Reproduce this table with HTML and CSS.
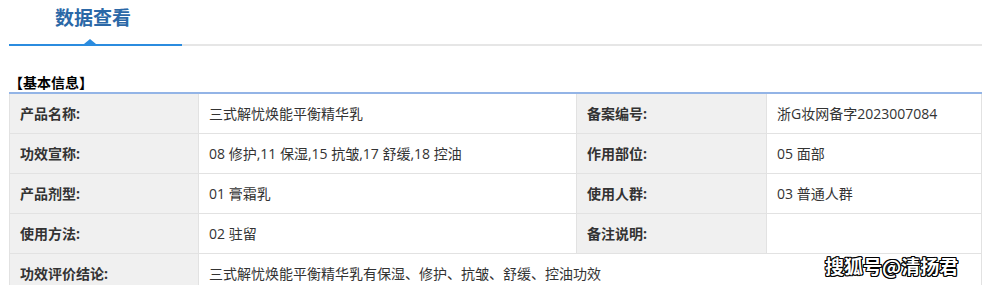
FILE: index.html
```html
<!DOCTYPE html>
<html lang="zh-CN">
<head>
    <meta charset="UTF-8">
    <title>数据查看</title>
    <link rel="stylesheet" href="styles.css">
</head>
<body>
    <div class="page">
        <div class="tabs">
            <div class="tab active">数据查看</div>
        </div>

        <div class="section-title">【基本信息】</div>

        <div class="info-table">
            <div class="cell label">产品名称:</div>
            <div class="cell value">三式解忧焕能平衡精华乳</div>
            <div class="cell label">备案编号:</div>
            <div class="cell value">浙G妆网备字2023007084</div>

            <div class="cell label">功效宣称:</div>
            <div class="cell value">08 修护,11 保湿,15 抗皱,17 舒缓,18 控油</div>
            <div class="cell label">作用部位:</div>
            <div class="cell value">05 面部</div>

            <div class="cell label">产品剂型:</div>
            <div class="cell value">01 膏霜乳</div>
            <div class="cell label">使用人群:</div>
            <div class="cell value">03 普通人群</div>

            <div class="cell label">使用方法:</div>
            <div class="cell value">02 驻留</div>
            <div class="cell label">备注说明:</div>
            <div class="cell value"></div>

            <div class="cell label">功效评价结论:</div>
            <div class="cell value wide">三式解忧焕能平衡精华乳有保湿、修护、抗皱、舒缓、控油功效</div>
        </div>
    </div>

    <div class="watermark">搜狐号@清扬君</div>
</body>
</html>
```

FILE: styles.css
```css
body {
    margin: 0;
    background-color: #fff;
    font-family: "Open Sans", "Noto Sans CJK SC", sans-serif;
    color: #333;
    overflow: hidden;
}
.page {
    padding-left: 9px;
}

/* tab bar */
.tabs {
    height: 44px;
    border-bottom: 2px solid #e6e6e6;
    display: flex;
}
.tab {
    width: 173px;
    box-sizing: border-box;
    padding-left: 46px;
    font-family: "Noto Sans CJK SC", sans-serif;
    font-size: 19px;
    font-weight: bold;
    line-height: 34px;
    color: #2b68a7;
    position: relative;
}
.tab.active {
    border-bottom: 2px solid #2b8cdf;
    height: 46px;
    box-sizing: border-box;
}
.tab.active::after {
    content: "";
    position: absolute;
    left: 75px;
    bottom: 0;
    border-left: 6px solid transparent;
    border-right: 6px solid transparent;
    border-bottom: 5px solid #2b8cdf;
}

.section-title {
    margin-top: 27px;
    font-family: "Noto Sans CJK SC", sans-serif;
    font-size: 14px;
    font-weight: bold;
    color: #000;
    line-height: 18px;
    padding-bottom: 1px;
    border-bottom: 2px solid #93b4e6;
}

/* info grid */
.info-table {
    display: grid;
    grid-template-columns: 189px 378px 190px 1fr;
    border-left: 1px solid #e2e2e2;
}
.cell {
    height: 39px;
    line-height: 39px;
    border-bottom: 1px solid #e2e2e2;
    border-right: 1px solid #e2e2e2;
    font-size: 14px;
    white-space: nowrap;
}
.label {
    background-color: #f0f0f0;
    font-weight: bold;
    padding-left: 10px;
    color: #333;
}
.value {
    padding-left: 10px;
    color: #333;
}
.wide {
    grid-column: 2 / 5;
}

.watermark {
    position: absolute;
    left: 825px;
    top: 252px;
    font-family: "Noto Sans CJK SC", sans-serif;
    font-size: 19px;
    font-weight: bold;
    color: #fff;
    text-shadow: -1px 0 #000, 1px 0 #000, 0 -1px #000, 0 1px #000, 1px 1px #000, -1px -1px #000, 1px -1px #000, -1px 1px #000;
}
```
